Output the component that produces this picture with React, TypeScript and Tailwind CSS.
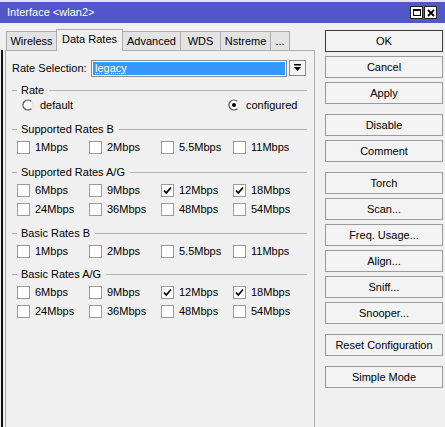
import React from "react";

const Check = ({ checked }: { checked?: boolean }) => (
  <div className="w-[13px] h-[13px] bg-white border border-[#9a9a9a] flex items-center justify-center shrink-0">
    {checked && (
      <svg width="11" height="11" viewBox="0 0 11 11">
        <path d="M2 5.5 L4.3 8 L9 2.5" stroke="#000" strokeWidth="1.7" fill="none" />
      </svg>
    )}
  </div>
);

const Radio = ({ checked }: { checked?: boolean }) => (
  <svg width="12" height="12" viewBox="0 0 12 12" className="shrink-0">
    <circle cx="6" cy="6" r="5" fill="#fff" />
    <path d="M9.5 2.5 A5 5 0 1 0 9.5 9.5" stroke="#555" strokeWidth="1.2" fill="none" />
    <path d="M9.5 2.5 A5 5 0 0 1 9.5 9.5" stroke="#e0e0e0" strokeWidth="1.2" fill="none" />
    {checked && <circle cx="6" cy="6" r="2" fill="#000" />}
  </svg>
);

const Header = ({ label }: { label: string }) => (
  <div className="h-[18px] flex items-center">
    <div className="w-[5px] h-px bg-[#a9a9a9]" />
    <span className="ml-[4px]">{label}</span>
    <div className="flex-1 h-px bg-[#b4b4b4] ml-[5px] mr-[7px]" />
  </div>
);

type Item = [string, boolean];

const Row = ({ items }: { items: Item[] }) => (
  <div className="h-[19px] flex items-center pl-[5px]">
    {items.map(([l, c]) => (
      <div key={l} className="w-[72px] flex items-center">
        <Check checked={c} />
        <span className="ml-[5px]">{l}</span>
      </div>
    ))}
  </div>
);

const Btn = ({ label, def, className = "" }: { label: string; def?: boolean; className?: string }) => (
  <div
    className={`h-[22px] w-[118px] flex items-center justify-center bg-[#f3f3f3] border ${
      def ? "border-[#3a3a3a]" : "border-[#9a9a9a]"
    } ${className}`}
  >
    {label}
  </div>
);

const tabs: [string, number][] = [
  ["Wireless", 51],
  ["Data Rates", 67],
  ["Advanced", 59],
  ["WDS", 41],
  ["Nstreme", 51],
  ["...", 20],
];

export default function App() {
  return (
    <div className="w-[445px] h-[427px] bg-[#f0f0f0] overflow-hidden flex flex-col font-['Liberation_Sans',Arial,sans-serif] text-[11px] text-black leading-none">
      <div className="h-[2px] bg-[#e4e4ee]" />
      <div className="h-[21px] bg-[#5157c9] flex items-center justify-between pl-[7px] pr-[8px] text-white">
        <span>Interface &lt;wlan2&gt;</span>
        <div className="flex gap-[1px]">
          <div className="w-[13px] h-[13px] bg-white border border-[#222] flex items-center justify-center">
            <div className="w-[8px] h-[7px] border border-black border-t-2" />
          </div>
          <div className="w-[13px] h-[13px] bg-white border border-[#222] flex items-center justify-center">
            <svg width="8" height="8" viewBox="0 0 8 8">
              <path d="M1 1 L7 7 M7 1 L1 7" stroke="#000" strokeWidth="1.8" />
            </svg>
          </div>
        </div>
      </div>
      <div className="flex flex-1">
        <div className="w-[3px] flex flex-col">
          <div className="h-[27px]" />
          <div className="flex-1 w-[2px] ml-[1px] bg-[#111]" />
        </div>
        <div className="ml-[2px] w-[310px] flex flex-col pt-[5px]">
          <div className="flex items-end h-[22px] pl-[1px] relative z-10">
            {tabs.map(([t, w], i) => {
              const active = t === "Data Rates";
              return (
                <div
                  key={t}
                  style={{ width: w }}
                  className={`flex items-center justify-center border-t border-l border-r border-[#adadad] ${
                    i > 0 ? "-ml-px" : ""
                  } ${active ? "h-[22px] bg-[#f0f0f0] pb-[3px] -mb-px relative z-10" : "h-[19px] bg-[#e3e3e3]"}`}
                >
                  {t}
                </div>
              );
            })}
          </div>
          <div className="flex-1 border border-b-0 border-[#adadad] flex flex-col pl-[6px] pt-[8px]">
            <div className="h-[18px] flex items-center">
              <span className="w-[79px]">Rate Selection:</span>
              <div className="w-[196px] h-[17px] border border-[#8a8a8a] bg-white p-px">
                <div className="h-full bg-[#3399ff] text-white flex items-center pl-[2px]">
                  <span className="underline decoration-dotted">legacy</span>
                </div>
              </div>
              <div className="ml-[2px] w-[17px] h-[16px] border border-[#8a8a8a] bg-[#f3f3f3] flex items-center justify-center">
                <svg width="9" height="8" viewBox="0 0 9 8">
                  <rect x="1" y="0" width="7" height="1.5" fill="#000" />
                  <path d="M1 3 L8 3 L4.5 7 Z" fill="#000" />
                </svg>
              </div>
            </div>
            <div className="mt-[4px]">
              <Header label="Rate" />
            </div>
            <div className="h-[12px] flex items-center">
              <div className="w-[216px] flex items-center pl-[10px]">
                <Radio />
                <span className="ml-[6px]">default</span>
              </div>
              <div className="flex items-center">
                <Radio checked />
                <span className="ml-[6px]">configured</span>
              </div>
            </div>
            <div className="mt-[9px]">
              <Header label="Supported Rates B" />
              <Row items={[["1Mbps", false], ["2Mbps", false], ["5.5Mbps", false], ["11Mbps", false]]} />
            </div>
            <div className="mt-[6px]">
              <Header label="Supported Rates A/G" />
              <Row items={[["6Mbps", false], ["9Mbps", false], ["12Mbps", true], ["18Mbps", true]]} />
              <Row items={[["24Mbps", false], ["36Mbps", false], ["48Mbps", false], ["54Mbps", false]]} />
            </div>
            <div className="mt-[5px]">
              <Header label="Basic Rates B" />
              <Row items={[["1Mbps", false], ["2Mbps", false], ["5.5Mbps", false], ["11Mbps", false]]} />
            </div>
            <div className="mt-[4px]">
              <Header label="Basic Rates A/G" />
              <Row items={[["6Mbps", false], ["9Mbps", false], ["12Mbps", true], ["18Mbps", true]]} />
              <Row items={[["24Mbps", false], ["36Mbps", false], ["48Mbps", false], ["54Mbps", false]]} />
            </div>
          </div>
        </div>
        <div className="ml-[10px] flex flex-col pt-[7px] gap-[4px]">
          <Btn label="OK" def />
          <Btn label="Cancel" />
          <Btn label="Apply" />
          <Btn label="Disable" className="mt-[6px]" />
          <Btn label="Comment" />
          <Btn label="Torch" className="mt-[6px]" />
          <Btn label="Scan..." />
          <Btn label="Freq. Usage..." />
          <Btn label="Align..." />
          <Btn label="Sniff..." />
          <Btn label="Snooper..." />
          <Btn label="Reset Configuration" className="mt-[6px]" />
          <Btn label="Simple Mode" className="mt-[6px]" />
        </div>
      </div>
    </div>
  );
}
